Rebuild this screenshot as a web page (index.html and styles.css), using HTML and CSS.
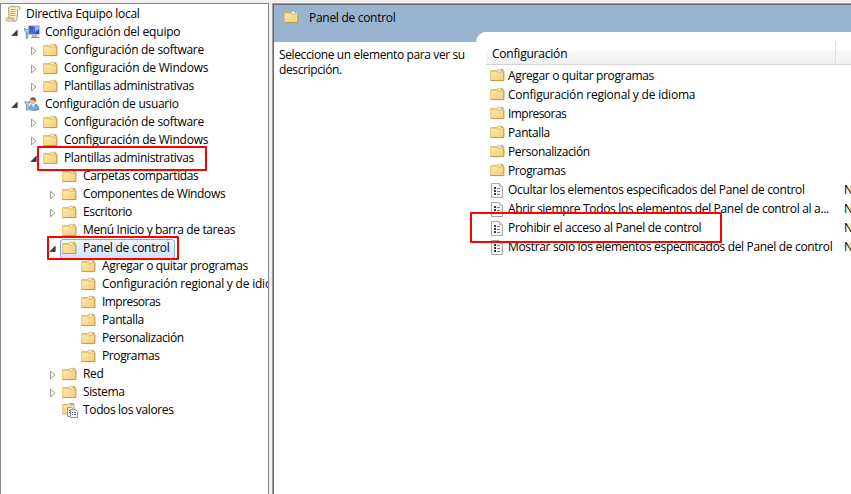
FILE: index.html
```html
<!DOCTYPE html>
<html lang="es">
<head>
<meta charset="utf-8">
<title>Directiva Equipo local</title>
<link rel="stylesheet" href="styles.css">
</head>
<body>
<svg class="defs" aria-hidden="true">
  <defs>
    <linearGradient id="fg" x1="0" y1="0" x2="1" y2="1"><stop offset="0" stop-color="#fdeaa8"/><stop offset="1" stop-color="#f0cd78"/></linearGradient>
    <linearGradient id="sg" x1="0" y1="0" x2="1" y2="1"><stop offset="0" stop-color="#1830a8"/><stop offset=".5" stop-color="#4b78e0"/><stop offset="1" stop-color="#1735b2"/></linearGradient>
    <symbol id="folder" viewBox="0 0 16 16">
      <path d="M.8 3.500h6.400L8 2.300h4.800l.7 1.200V13H.8z" fill="#efcf83" stroke="#d3ae5c" stroke-width=".7"/>
      <path d="M8.500 2.800h4.200V4.200H8.500z" fill="#fff"/><path d="M10.700 2.800h2V4h-2z" fill="#5aa7dc"/>
      <path d="M.7 4.500h6l1 1h6v8H.7z" fill="url(#fg)" stroke="#e2c06f" stroke-width=".6"/>
      <path d="M.5 13.600h13.400V4.500" fill="none" stroke="#bb9448" stroke-width=".9"/>
    </symbol>
    <symbol id="policy" viewBox="0 0 14 16">
      <path d="M1.500 1.500h8l3 3v11h-11z" fill="#fafafa" stroke="#a6a6a6"/>
      <path d="M9.500 1.500v3h3" fill="#e4e4e4" stroke="#b8b8b8"/>
      <path d="M4 5h2v2H4zm0 3h2v2H4zm0 3h2v2H4z" fill="#34344e"/>
      <path d="M7 6.500h3M7 9.500h3M7 12.500h3" stroke="#77779a"/>
    </symbol>
    <symbol id="scroll" viewBox="0 0 16 16">
      <path d="M3.500 1.500Q4 .6 5 .6h8.500q1.500 0 1.500 1.500t-1.500 1.500h-.8L12 13q0 2-2 2H2.500Q1 15 1 13.500T2.500 12H4z" fill="#f8edc9" stroke="#a4946d" stroke-width=".9"/>
      <path d="M2.500 12h6v1.500q0 1.500 1.500 1.500" fill="#dfc98d" stroke="#a4946d" stroke-width=".8"/>
      <path d="M5.500 3.500h5M5.500 5.500h5M5.500 7.500h5M5.300 9.500h5" stroke="#a99d80" stroke-width=".9"/>
    </symbol>
    <symbol id="computer" viewBox="0 0 16 16">
      <path d="M4.500 1.800h11v8.700h-11z" fill="url(#sg)" stroke="#c4c8cf"/>
      <path d="M10 2.500h5v2.500q-2.500 1-4 3.500 1-3-1-6" fill="#92b8f5"/>
      <path d="M8 11h5l1 2.500H8z" fill="#b0b6bc"/><path d="M7 13.500h8" stroke="#858c94"/>
      <path d="M.7 4v3l1.500 1.300V14q.8 1.300 1.600 0V8.300L5.300 7V4L4 5.500H2z" fill="#bfd8ea" stroke="#527fa4" stroke-width=".8"/>
    </symbol>
    <symbol id="user" viewBox="0 0 16 16">
      <path d="M5 13.500q0-5.500 4.500-5.500 5.500 0 5.500 5.500-4 2.300-10 0" fill="#76a9d3" stroke="#4b82ad" stroke-width=".7"/>
      <path d="M7.500 8L9.500 11.500l1.500-3.500" fill="#eef6fc"/>
      <circle cx="8.600" cy="5" r="2.800" fill="#e9b986"/><path d="M6 3.500Q6.500 1 9.500 1.200 12.800 1.700 11.500 6.500L10 4z" fill="#6b5644"/>
      <path d="M1.100 5V7.500L2.400 8.700V14q.8 1.300 1.600 0V8.700L5.300 7.500V5L4.200 6.300H2.400z" fill="#c9dfed" stroke="#527fa4" stroke-width=".8"/>
    </symbol>
    <symbol id="all" viewBox="0 0 16 16">
      <path d="M.8 2.500h5.400L7 1.400h4.500l.6 1.100V12H.8z" fill="url(#fg)" stroke="#cba550" stroke-width=".8"/><path d="M8.500 2.300h3" stroke="#3d9de0"/>
      <path d="M5.500 5.500h4l1 1v8h-5z" fill="#fff" stroke="#9a9a9a"/>
      <path d="M8.500 7.500h5l2 2v6h-7z" fill="#fff" stroke="#8e8e8e"/>
      <path d="M10 10.500h1M12 10.500h2M10 12.500h1M12 12.500h2M7 8.500h1M7 10.500h1" stroke="#555b78"/>
    </symbol>
    <symbol id="closed" viewBox="0 0 8 10"><path d="M1.500 1.200v7.600L6 5z" fill="#fff" stroke="#9b9b9b"/></symbol>
    <symbol id="open" viewBox="0 0 8 10"><path d="M6.200 2.300v5.200H1z" fill="#3c3c3c" stroke="#222" stroke-width=".7"/></symbol>
  </defs>
</svg>
<div class="window">
  <nav class="tree">
    <div class="row root"><svg class="icon"><use href="#scroll"/></svg><span>Directiva Equipo local</span></div>
    <div class="row"><svg class="arrow"><use href="#open"/></svg><svg class="icon"><use href="#computer"/></svg><span class="wide">Configuración del equipo</span></div>
    <div class="row l1"><svg class="arrow"><use href="#closed"/></svg><svg class="icon"><use href="#folder"/></svg><span>Configuración de software</span></div>
    <div class="row l1"><svg class="arrow"><use href="#closed"/></svg><svg class="icon"><use href="#folder"/></svg><span class="wide">Configuración de Windows</span></div>
    <div class="row l1"><svg class="arrow"><use href="#closed"/></svg><svg class="icon"><use href="#folder"/></svg><span class="tight">Plantillas administrativas</span></div>
    <div class="row"><svg class="arrow"><use href="#open"/></svg><svg class="icon"><use href="#user"/></svg><span>Configuración de usuario</span></div>
    <div class="row l1"><svg class="arrow"><use href="#closed"/></svg><svg class="icon"><use href="#folder"/></svg><span>Configuración de software</span></div>
    <div class="row l1"><svg class="arrow"><use href="#closed"/></svg><svg class="icon"><use href="#folder"/></svg><span class="wide">Configuración de Windows</span></div>
    <div class="row l1"><svg class="arrow"><use href="#open"/></svg><svg class="icon"><use href="#folder"/></svg><span class="tight">Plantillas administrativas</span><i class="mark mark-templates"></i></div>
    <div class="row l2"><svg class="arrow"></svg><svg class="icon"><use href="#folder"/></svg><span class="tighter">Carpetas compartidas</span></div>
    <div class="row l2"><svg class="arrow"><use href="#closed"/></svg><svg class="icon"><use href="#folder"/></svg><span class="tight">Componentes de Windows</span></div>
    <div class="row l2"><svg class="arrow"><use href="#closed"/></svg><svg class="icon"><use href="#folder"/></svg><span class="tighter">Escritorio</span></div>
    <div class="row l2"><svg class="arrow"></svg><svg class="icon"><use href="#folder"/></svg><span class="tighter">Menú Inicio y barra de tareas</span></div>
    <div class="row l2 selected"><svg class="arrow"><use href="#open"/></svg><svg class="icon"><use href="#folder"/></svg><span>Panel de control</span><i class="mark mark-panel"></i></div>
    <div class="row l3"><svg class="arrow"></svg><svg class="icon"><use href="#folder"/></svg><span class="tight">Agregar o quitar programas</span></div>
    <div class="row l3"><svg class="arrow"></svg><svg class="icon"><use href="#folder"/></svg><span class="wide">Configuración regional y de idioma</span></div>
    <div class="row l3"><svg class="arrow"></svg><svg class="icon"><use href="#folder"/></svg><span class="tightest">Impresoras</span></div>
    <div class="row l3"><svg class="arrow"></svg><svg class="icon"><use href="#folder"/></svg><span class="tighter">Pantalla</span></div>
    <div class="row l3"><svg class="arrow"></svg><svg class="icon"><use href="#folder"/></svg><span class="tighter">Personalización</span></div>
    <div class="row l3"><svg class="arrow"></svg><svg class="icon"><use href="#folder"/></svg><span class="tighter">Programas</span></div>
    <div class="row l2"><svg class="arrow"><use href="#closed"/></svg><svg class="icon"><use href="#folder"/></svg><span>Red</span></div>
    <div class="row l2"><svg class="arrow"><use href="#closed"/></svg><svg class="icon"><use href="#folder"/></svg><span class="tighter">Sistema</span></div>
    <div class="row l2"><svg class="arrow"></svg><svg class="icon"><use href="#all"/></svg><span class="tight">Todos los valores</span></div>
  </nav>
  <main class="details">
    <section class="info">
      <header class="title"><svg class="icon"><use href="#folder"/></svg><span>Panel de control</span></header>
      <p class="hint tighter">Seleccione un elemento para ver su descripción.</p>
    </section>
    <section class="listing">
      <div class="sheet">
        <div class="columns"><span class="wide">Configuración</span></div>
        <div class="item"><svg class="icon"><use href="#folder"/></svg><span class="tight">Agregar o quitar programas</span></div>
        <div class="item"><svg class="icon"><use href="#folder"/></svg><span class="wide">Configuración regional y de idioma</span></div>
        <div class="item"><svg class="icon"><use href="#folder"/></svg><span class="tightest">Impresoras</span></div>
        <div class="item"><svg class="icon"><use href="#folder"/></svg><span class="tighter">Pantalla</span></div>
        <div class="item"><svg class="icon"><use href="#folder"/></svg><span class="tighter">Personalización</span></div>
        <div class="item"><svg class="icon"><use href="#folder"/></svg><span class="tighter">Programas</span></div>
        <div class="item"><svg class="icon policy"><use href="#policy"/></svg><span class="long">Ocultar los elementos especificados del Panel de control</span><b>N</b></div>
        <div class="item"><svg class="icon policy"><use href="#policy"/></svg><span class="long">Abrir siempre Todos los elementos del Panel de control al a...</span><b>N</b></div>
        <div class="item"><svg class="icon policy"><use href="#policy"/></svg><span class="long">Prohibir el acceso al Panel de control</span><b>N</b><i class="mark mark-policy"></i></div>
        <div class="item"><svg class="icon policy"><use href="#policy"/></svg><span class="long">Mostrar solo los elementos especificados del Panel de control</span><b>N</b></div>
      </div>
    </section>
  </main>
</div>
</body>
</html>
```
FILE: styles.css
```css
* { box-sizing: border-box; }
body {
  margin: 0;
  background: #f0f0f0;
  color: #000;
  font: 12px/18px "Open Sans", "Noto Sans", sans-serif;
  letter-spacing: -0.29px;
  overflow: hidden;
}
.wide { letter-spacing: -0.21px; }
.long { letter-spacing: -0.33px; }
.tight { letter-spacing: -0.35px; }
.tighter { letter-spacing: -0.38px; }
.tightest { letter-spacing: -0.55px; }
.defs { position: absolute; width: 0; height: 0; }
.window { display: flex; gap: 3px; height: 494px; padding-top: 3px; }
.tree {
  width: 269px;
  flex: none;
  padding-top: 1px;
  background: #fff;
  border: 1px solid #828790;
  border-bottom: 0;
  overflow: hidden;
}
.row { position: relative; display: flex; align-items: center; height: 18px; padding-left: 10px; white-space: nowrap; }
.root { padding-left: 4px; }
.l1 { padding-left: 29px; }
.l2 { padding-left: 48px; }
.l3 { padding-left: 67px; }
.arrow { width: 8px; height: 10px; flex: none; margin: 2px 5px 0 0; }
.icon { width: 16px; height: 16px; flex: none; margin-right: 5px; }
.selected::before {
  content: "";
  position: absolute;
  left: 59px;
  top: 0;
  width: 113px;
  height: 18px;
  border: 1px solid #84acdd;
  border-radius: 3px;
  background: linear-gradient(#f1f7fe, #cfe4fe);
}
.selected > * { position: relative; }
.mark { position: absolute; z-index: 2; border: 2px solid #fe0000; border-radius: 1px; }
.selected > .mark { position: absolute; }
.mark-templates { left: 36px; top: -3px; width: 170px; height: 25px; }
.mark-panel { left: 46px; top: -3px; width: 132px; height: 24px; }
.mark-policy { left: -16px; top: -6px; width: 252px; height: 31px; }
.details {
  flex: 1;
  display: flex;
  min-width: 0;
  padding: 1px 0 0 1px;
  background: #696969;
  border: solid #a0a0a0;
  border-width: 1px 0 0 1px;
}
.info { width: 202px; flex: none; background: #fff; }
.title { display: flex; align-items: center; height: 37px; padding: 0 0 11px 10px; background: #99b4d1; }
.title .icon { margin: -2px 9px 0 0; }
.hint { margin: 5px 0 0; padding-left: 5px; line-height: 15px; }
.listing { flex: 1; min-width: 0; background: linear-gradient(#99b4d1 37px, #fff 37px); padding-top: 27px; }
.sheet { height: 100%; padding-left: 10px; background: #fff; border-top-left-radius: 10px; }
.columns {
  height: 33px;
  padding: 13px 0 0 6px;
  background: linear-gradient(#fff 19px, #f6f7f8 19px, #f0f1f3 100%);
  border-bottom: 1px solid #d5d5d5;
  position: relative;
}
.columns::after { content: ""; position: absolute; left: 349px; top: 10px; width: 1px; height: 22px; background: #dfe1e4; }
.columns + .item { margin-top: 1px; }
.item { position: relative; display: flex; align-items: center; height: 19px; padding-left: 4px; white-space: nowrap; }
.item .icon { margin: -2px 2px 0 0; }
.item .policy { width: 14px; margin: 0 4px 0 0; }
.item span { width: 336px; flex: none; }
.item b { font-weight: 400; }
```
